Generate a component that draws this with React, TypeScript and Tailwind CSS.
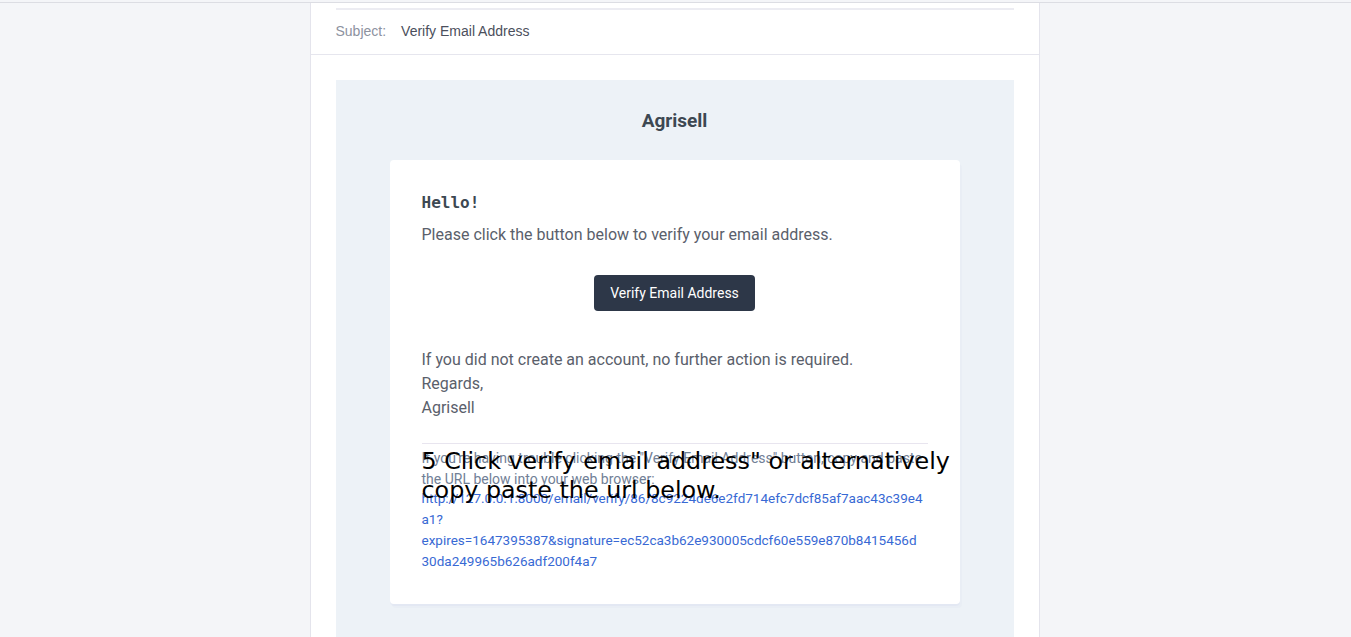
const verifyUrl = [
  'http://127.0.0.1:8000/email/verify/86/8c9224de6e2fd714efc7dcf85af7aac43c39e4',
  'a1?',
  'expires=1647395387&signature=ec52ca3b62e930005cdcf60e559e870b8415456d',
  '30da249965b626adf200f4a7',
];

function SubjectRow() {
  return (
    <div className="border-b border-[#e6e6ee] px-[25px]">
      <div className="flex h-[46px] items-center gap-[15px] border-t-2 border-[#ececf2] pb-[1px] font-['Liberation_Sans',Arial,sans-serif] text-[14px]">
        <span className="text-[#8d92a0]">Subject:</span>
        <span className="text-[#4b4f5c]">Verify Email Address</span>
      </div>
    </div>
  );
}

function MailBody() {
  return (
    <div className="relative mx-[25px] mt-[25px] bg-[#edf2f7] pb-[40px] font-['Roboto','Open_Sans',sans-serif]">
      <div className="pt-[27px] pb-[25px] text-center text-[19px] leading-[28px] font-bold text-[#3d4852]">Agrisell</div>

      <div className="relative mx-auto w-[570px] rounded-sm bg-white p-8 shadow-[0_2px_0_rgba(0,0,150,0.025),2px_4px_0_rgba(0,0,150,0.015)]">
        <h1 className="font-['DejaVu_Sans_Mono',monospace] text-[16px] leading-[22px] font-bold text-[#3d4852]">Hello!</h1>
        <p className="mt-[9px] text-[16px] leading-[24px] text-[#5a606b]">
          Please click the button below to verify your email address.
        </p>

        <div className="mt-[28px] flex justify-center">
          <button
            type="button"
            className="rounded-[4px] bg-[#2d3748] px-[16px] py-[8px] text-[14px] leading-[20px] text-white"
          >
            Verify Email Address
          </button>
        </div>

        <p className="mt-[37px] text-[16px] leading-[24px] text-[#5a606b]">
          If you did not create an account, no further action is required.
        </p>
        <p className="text-[16px] leading-[24px] text-[#5a606b]">
          Regards,
          <br />
          Agrisell
        </p>

        <div className="mt-[23px] border-t border-[#e8e5ef] pt-[4px] text-[14px] leading-[21px] text-[#718096]">
          <p>
            If you're having trouble clicking the "Verify Email Address" button, copy and paste the URL below
            into your web browser:
          </p>
          <p className="-mt-[2px] text-[13.5px] leading-[21px] text-[#3869d4]">
            {verifyUrl.map((line) => (
              <span key={line} className="block">
                {line}
              </span>
            ))}
          </p>
        </div>

        <div className="absolute left-8 top-[287px] w-[540px] font-['DejaVu_Sans',sans-serif] text-[23.8px] leading-[29px] text-black">
          5 Click verify email address" or alternatively copy paste the url below.
        </div>
      </div>
    </div>
  );
}

export default function App() {
  return (
    <div className="h-[637px] overflow-hidden bg-[#f4f5f8] pt-[2px]">
      <div className="h-full border-t border-[#dcdde3] pr-[2px]">
        <div className="mx-auto h-full w-[730px] border-x border-[#e4e4ec] bg-white pt-[5px]">
          <SubjectRow />
          <MailBody />
        </div>
      </div>
    </div>
  );
}
